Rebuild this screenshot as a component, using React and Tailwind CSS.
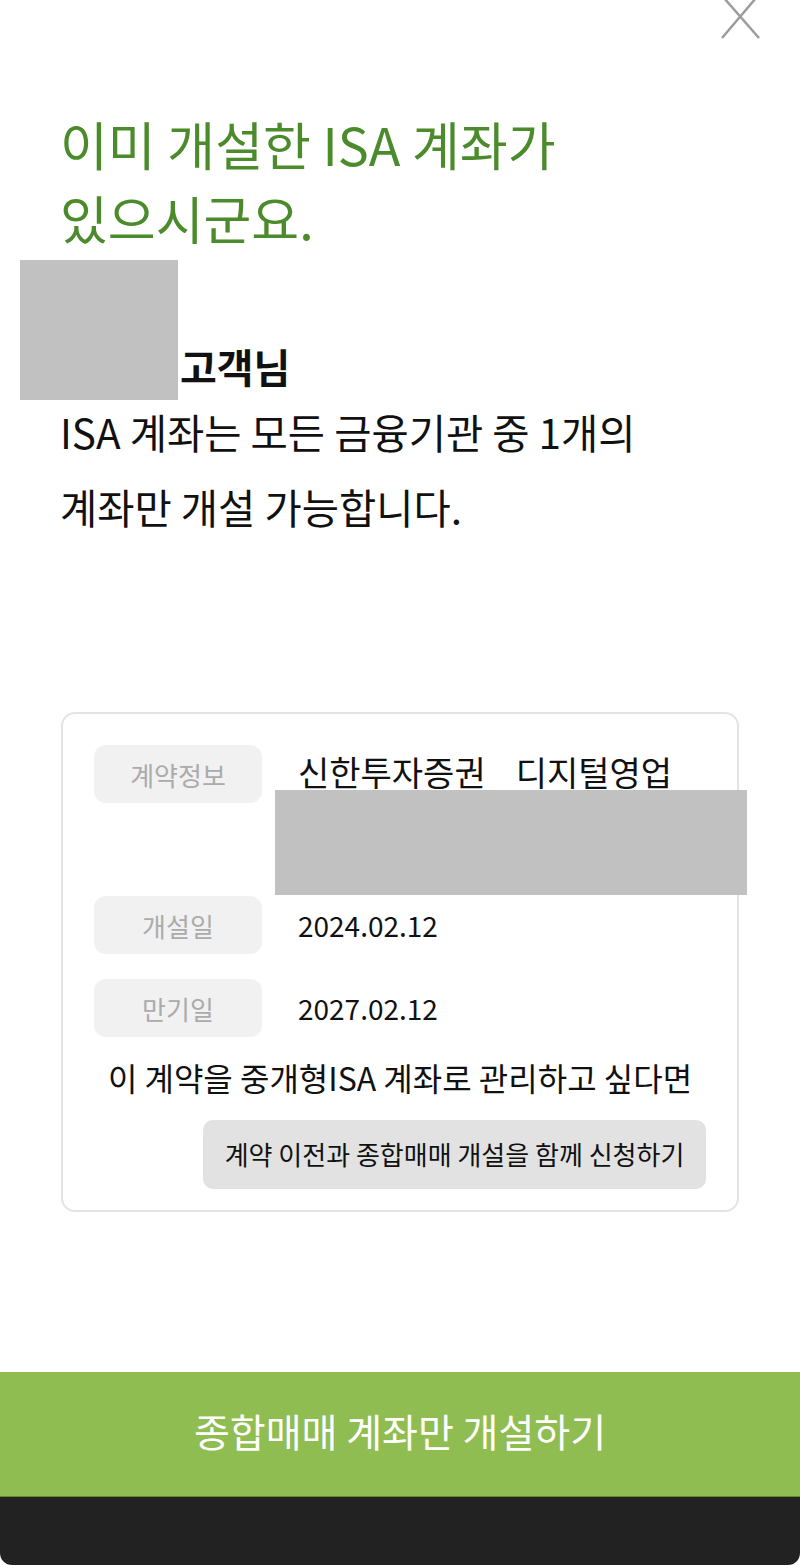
import React from 'react';

const font = { fontFamily: '"Noto Sans CJK KR", "Noto Sans", sans-serif' };

const InfoRow = ({ label, children, className = '' }) => {
  return (
    <div className={`flex items-start ${className}`}>
      <div className="w-[168px] h-[58px] shrink-0 bg-[#f1f1f1] rounded-[12px] flex items-center justify-center text-[26px] text-[#ababab]">
        {label}
      </div>
      <div className="ml-[36px] flex-1">{children}</div>
    </div>
  );
};

const App = () => {
  return (
    <div className="relative w-[800px] h-[1565px] bg-white flex flex-col overflow-hidden" style={font}>
      {/* close */}
      <svg className="absolute top-0 left-[720px] w-[44px] h-[42px]" viewBox="0 0 44 42" fill="none">
        <line x1="2" y1="38" x2="36" y2="-2" stroke="#9c9c9c" strokeWidth="2.5" />
        <line x1="4" y1="-2" x2="39" y2="38" stroke="#9c9c9c" strokeWidth="2.5" />
      </svg>

      <h1 className="pt-[107px] pb-[5px] pl-[60px] text-[52px] leading-[74px] font-normal text-[#4c8b2c]">
        이미 개설한 ISA 계좌가
        <br />
        있으시군요.
      </h1>

      <div className="flex items-end">
        <div className="ml-[20px] w-[158px] h-[140px] bg-[#c1c1c1]" />
        <span className="ml-[2px] mb-[12px] text-[40px] leading-[44px] font-bold text-[#111]">고객님</span>
      </div>

      <p className="-mt-[6px] pl-[60px] text-[40.5px] leading-[75px] text-[#111]">
        ISA 계좌는 모든 금융기관 중 1개의
        <br />
        계좌만 개설 가능합니다.
      </p>

      <div className="mt-[168px] mx-[61px] border-2 border-[#e4e4e4] rounded-[14px] pt-[31px] pl-[31px] pr-[31px] pb-[21px]">
        <InfoRow label="계약정보">
          <div className="mt-[9px] flex gap-[30px] text-[34px] leading-[36px] text-[#111]">
            <span>신한투자증권</span>
            <span>디지털영업</span>
          </div>
          <div className="-ml-[23px] w-[472px] h-[105px] bg-[#c1c1c1]" />
        </InfoRow>

        <InfoRow label="개설일" className="mt-[1px] items-center">
          <span className="text-[28px] leading-[58px] text-[#111] -mt-[4px]">2024.02.12</span>
        </InfoRow>

        <InfoRow label="만기일" className="mt-[25px] items-center">
          <span className="text-[28px] leading-[58px] text-[#111] -mt-[4px]">2027.02.12</span>
        </InfoRow>

        <p className="mt-[20px] text-center text-[32px] leading-[40px] text-[#111]">
          이 계약을 중개형ISA 계좌로 관리하고 싶다면
        </p>

        <div className="mt-[23px] flex justify-end">
          <button className="w-[503px] h-[69px] pb-[2px] bg-[#e2e2e2] rounded-[10px] text-[26px] text-[#111]">
            계약 이전과 종합매매 개설을 함께 신청하기
          </button>
        </div>
      </div>

      <div className="mt-auto">
        <button className="w-full h-[125px] pb-[8px] bg-[#8fbd52] border-b border-[#5f8a30] text-[39px] text-white">
          종합매매 계좌만 개설하기
        </button>
        <div className="h-[68px] bg-[#222222] rounded-b-[12px]" />
      </div>
    </div>
  );
};

export default App;
